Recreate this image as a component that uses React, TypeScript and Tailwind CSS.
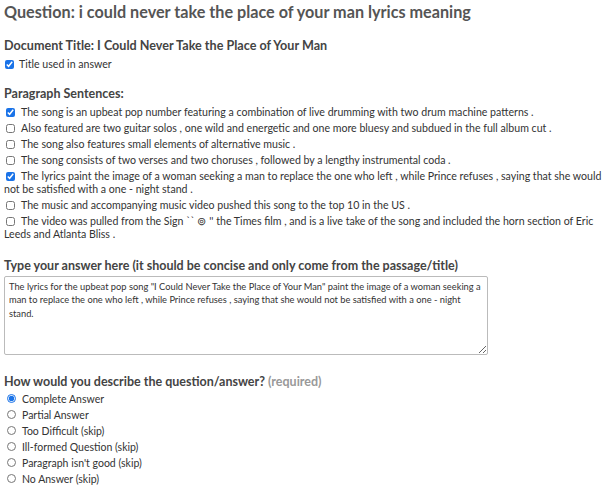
import { useState } from "react"

const sentences = [
    { text: "The song is an upbeat pop number featuring a combination of live drumming with two drum machine patterns .", checked: true },
    { text: "Also featured are two guitar solos , one wild and energetic and one more bluesy and subdued in the full album cut .", checked: false },
    { text: "The song also features small elements of alternative music .", checked: false },
    { text: "The song consists of two verses and two choruses , followed by a lengthy instrumental coda .", checked: false },
    { text: "The lyrics paint the image of a woman seeking a man to replace the one who left , while Prince refuses , saying that she would not be satisfied with a one - night stand .", checked: true },
    { text: "The music and accompanying music video pushed this song to the top 10 in the US .", checked: false },
    { text: "The video was pulled from the Sign `` \u229a '' the Times film , and is a live take of the song and included the horn section of Eric Leeds and Atlanta Bliss .", checked: false },
]

const options = [
    "Complete Answer",
    "Partial Answer",
    "Too Difficult (skip)",
    "Ill-formed Question (skip)",
    "Paragraph isn't good (skip)",
    "No Answer (skip)",
]

export default function App() {
    const [checks, setChecks] = useState(sentences.map((s) => s.checked))
    const [choice, setChoice] = useState(0)
    const [answer, setAnswer] = useState(
        'The lyrics for the upbeat pop song "I Could Never Take the Place of Your Man" paint the image of a woman seeking a man to replace the one who left , while Prince refuses , saying that she would not be satisfied with a one - night stand.'
    )

    return (
        <div className="bg-white px-[4px] pt-[1px] text-[#333] font-['Lato',sans-serif]">
            <h1 className="text-[16.2px] leading-[22px] font-bold text-[#555]">
                Question: i could never take the place of your man lyrics meaning
            </h1>

            <h2 className="mt-[14px] text-[12.6px] leading-[18px] font-bold text-[#444]">
                Document Title: I Could Never Take the Place of Your Man
            </h2>
            <label className="mt-[2px] flex items-center gap-[5px] text-[10.6px] leading-[14px]">
                <input type="checkbox" defaultChecked className="w-[9px] h-[9px] m-0 ml-[1px] accent-[#1a73e8]" />
                Title used in answer
            </label>

            <h2 className="mt-[14px] text-[12.5px] leading-[18px] font-bold text-[#444]">
                Paragraph Sentences:
            </h2>
            <div className="mt-[2.5px] flex flex-col gap-[3px]">
                {sentences.map((s, i) => (
                    <label key={i} className="block text-[10.6px] leading-[13px]">
                        <input
                            type="checkbox"
                            checked={checks[i]}
                            onChange={() => setChecks(checks.map((c, j) => (j === i ? !c : c)))}
                            className="w-[9px] h-[9px] m-0 ml-[2px] mr-[6px] align-[-1px] accent-[#1a73e8]"
                        />
                        {s.text}
                    </label>
                ))}
            </div>

            <h2 className="mt-[16px] text-[12.5px] leading-[18px] font-bold text-[#444]">
                Type your answer here (it should be concise and only come from the passage/title)
            </h2>
            <textarea
                value={answer}
                onChange={(e) => setAnswer(e.target.value)}
                className="mt-[1px] block w-[484px] h-[79px] border border-[#bbb] rounded-[2px] pl-[4px] pr-[1px] py-[3px] text-[9.3px] leading-[13.5px] text-[#333] font-['Lato',sans-serif] outline-none"
            />

            <h2 className="mt-[18px] text-[12.5px] leading-[18px] font-bold text-[#444]">
                How would you describe the question/answer? <span className="text-[#999]">(required)</span>
            </h2>
            <div className="flex flex-col">
                {options.map((o, i) => (
                    <label key={o} className="flex items-center gap-[6px] text-[10.5px] leading-[16px]">
                        <input
                            type="radio"
                            name="desc"
                            checked={choice === i}
                            onChange={() => setChoice(i)}
                            className="w-[9px] h-[9px] m-0 ml-[3px] accent-[#1a73e8]"
                        />
                        {o}
                    </label>
                ))}
            </div>
        </div>
    )
}
